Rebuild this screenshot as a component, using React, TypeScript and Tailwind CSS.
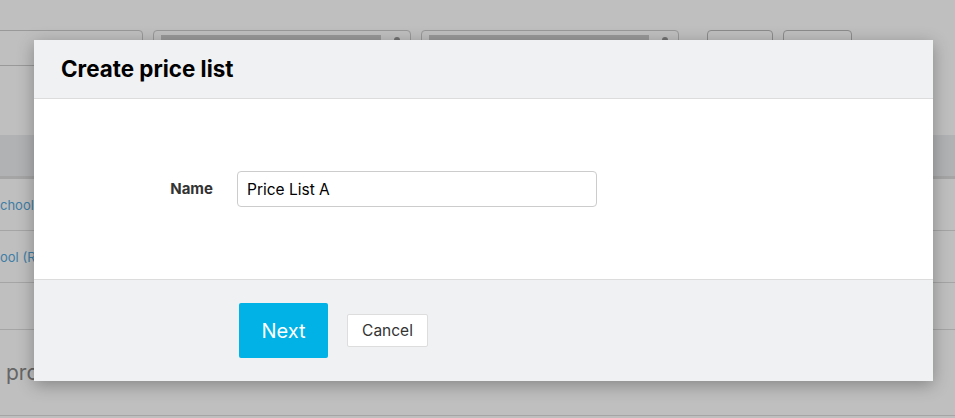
import React from 'react';

const BackgroundPage: React.FC = () => {
  return (
    <div className="h-[418px] w-[955px] overflow-hidden bg-white text-[#333]">
      <div className="flex h-[135px] items-start gap-[10px] pt-[30px]">
        <div className="-ml-[20px] h-[36px] w-[163px] rounded-[4px] border border-[#ccc]" />
        <div className="flex h-[36px] w-[258px] items-start justify-between rounded-[4px] border border-[#ccc] pl-[7px] pr-[10px] pt-[4px]">
          <div className="h-[22px] w-[220px] bg-[#cdcdcd]" />
          <div className="mt-[2px] h-[6px] w-[6px] rounded-full bg-[#999]" />
        </div>
        <div className="flex h-[36px] w-[258px] items-start justify-between rounded-[4px] border border-[#ccc] pl-[7px] pr-[10px] pt-[4px]">
          <div className="h-[22px] w-[220px] bg-[#cdcdcd]" />
          <div className="mt-[2px] h-[6px] w-[6px] rounded-full bg-[#999]" />
        </div>
        <div className="ml-[18px] flex gap-[10px]">
          <div className="h-[36px] w-[66px] rounded-[4px] border border-[#bbb]" />
          <div className="h-[36px] w-[69px] rounded-[4px] border border-[#bbb]" />
        </div>
      </div>
      <div className="h-[44px] border-b-[3px] border-[#ddd] bg-[#eceef1]" />
      <div className="flex h-[52px] items-center border-b border-[#ddd] text-[13px] text-[#55a8dd]">
        <span className="pt-[2px]">chool</span>
      </div>
      <div className="flex h-[52px] items-center border-b border-[#ddd] text-[13px] text-[#55a8dd]">
        <span className="pt-[2px]">ool (Ri</span>
      </div>
      <div className="h-[47px] border-b border-[#ddd]" />
      <div className="flex h-[86px] items-center border-b border-[#ddd] text-[21px] text-[#888]">
        <span className="ml-[6px]">pro</span>
      </div>
    </div>
  );
};

const App: React.FC = () => {
  return (
    <div className="relative h-[418px] w-[955px] overflow-hidden font-['Inter','Liberation_Sans',sans-serif]">
      <BackgroundPage />
      <div className="absolute inset-0 bg-black/25" />
      <div className="absolute left-[34px] top-[40px] w-[899px] bg-white shadow-[0_4px_16px_rgba(0,0,0,0.3)]">
        <div className="flex h-[59px] items-center border-b border-[#dcdcdc] bg-[#f0f1f3] px-[27px]">
          <h2 className="text-[22.4px] font-bold text-black">Create price list</h2>
        </div>
        <div className="flex h-[180px] items-center">
          <label className="w-[179px] text-right text-[15px] font-bold text-[#333]">Name</label>
          <input
            className="ml-[24px] h-[36px] w-[360px] rounded-[4px] border border-[#ccc] px-[9px] text-[15.5px] text-black outline-none"
            defaultValue="Price List A"
          />
        </div>
        <div className="flex h-[102px] items-center gap-[19px] border-t border-[#dcdcdc] bg-[#f0f1f3] pl-[205px]">
          <button className="h-[55px] w-[89px] rounded-[2px] bg-[#00b2e6] text-[20px] text-white">Next</button>
          <button className="h-[33px] w-[81px] rounded-[2px] border border-[#ddd] bg-white text-[15.5px] text-[#333]">
            Cancel
          </button>
        </div>
      </div>
    </div>
  );
};

export default App;
